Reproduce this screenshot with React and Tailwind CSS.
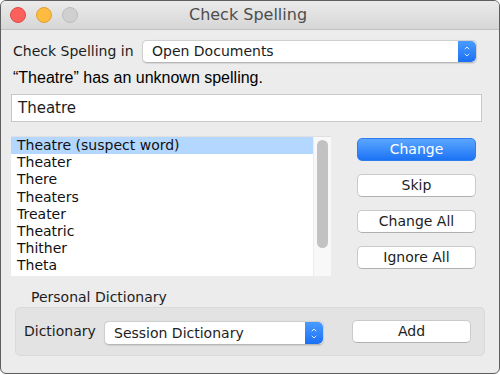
import { ChevronUp, ChevronDown } from 'lucide-react';

const words = ['Theatre (suspect word)', 'Theater', 'There', 'Theaters', 'Treater', 'Theatric', 'Thither', 'Theta'];

const Stepper = () => (
  <div className="w-[18px] h-full bg-gradient-to-b from-[#4a9bff] to-[#1a6ff5] rounded-r-[5px] flex flex-col items-center justify-center">
    <ChevronUp className="w-[10px] h-[8px] text-white -mb-[1px]" strokeWidth={2.5} />
    <ChevronDown className="w-[10px] h-[8px] text-white" strokeWidth={2.5} />
  </div>
);

const Popup = ({ label, className }) => (
  <div className={`flex items-stretch bg-white rounded-[5px] border border-[#cfcfcf] border-b-[#b8b8b8] shadow-[0_0.5px_1px_rgba(0,0,0,0.1)] ${className}`}>
    <div className="flex-1 flex items-center pl-[9px] text-[14px] text-[#1d1d1d]">{label}</div>
    <Stepper />
  </div>
);

const Button = ({ children, primary, className = '' }) => (
  <div
    className={`flex items-center justify-center h-[23px] rounded-[5px] text-[14px] ${
      primary
        ? 'bg-gradient-to-b from-[#5aa6ff] to-[#1b72f5] text-white border border-[#2e7cf0]'
        : 'bg-white text-[#1d1d1d] border border-[#cacaca] border-b-[#b0b0b0]'
    } ${className}`}
  >
    {children}
  </div>
);

export default function App() {
  return (
    <div className="w-[500px] h-[375px] bg-white" style={{ fontFamily: '"DejaVu Sans", "Liberation Sans", sans-serif' }}>
      <div className="w-[500px] h-[374px] border border-[#5e5e5e] rounded-[6px] overflow-hidden bg-[#ececec] flex flex-col">
        {/* Title bar */}
        <div className="h-[29px] shrink-0 bg-gradient-to-b from-[#ebebeb] to-[#d6d6d6] border-b border-[#c2c2c2] flex items-center relative">
          <div className="flex gap-[10px] pl-[9px]">
            <div className="w-[16px] h-[16px] rounded-full bg-[#fc605c] border border-[#de4a45]" />
            <div className="w-[16px] h-[16px] rounded-full bg-[#fdbc40] border border-[#dea034]" />
            <div className="w-[16px] h-[16px] rounded-full bg-[#d0d0d0] border border-[#bdbdbd]" />
          </div>
          <div className="absolute inset-0 flex items-center justify-center text-[16px] text-[#4d4d4d] pr-[4px]">Check Spelling</div>
        </div>

        {/* Body */}
        <div className="flex-1 flex flex-col px-[10px]">
          <div className="flex items-center mt-[10px] h-[23px]">
            <span className="w-[131px] pl-[2px] text-[14px] text-[#1d1d1d]">Check Spelling in</span>
            <Popup label="Open Documents" className="w-[335px] h-[23px]" />
          </div>

          <div className="mt-[4px] h-[22px] leading-[22px] pl-[2px] text-[16px] text-black" style={{ fontFamily: '"Liberation Sans", sans-serif' }}>
            “Theatre” has an unknown spelling.
          </div>

          <div className="mt-[5px] w-[471px] h-[28px] bg-white border border-[#c8c8c8] flex items-center pl-[6px] text-[15px] text-[#1d1d1d]">
            Theatre
          </div>

          <div className="mt-[14px] flex">
            <div className="w-[320px] h-[140px] flex bg-white border-t border-[#e0e0e0]">
              <div className="w-[302px] flex flex-col">
                {words.map((w, i) => (
                  <div
                    key={w}
                    className={`h-[17.2px] flex items-center pl-[6px] text-[14px] text-[#111] ${i === 0 ? 'bg-[#b3d7ff]' : ''}`}
                  >
                    {w}
                  </div>
                ))}
              </div>
              <div className="w-[18px] bg-[#f8f8f8] border-l border-[#ececec] flex justify-center pt-[3px]">
                <div className="w-[11px] h-[108px] rounded-full bg-[#c2c2c2]" />
              </div>
            </div>

            <div className="ml-[26px] flex flex-col gap-[13px] pt-[2px]">
              <Button primary className="w-[119px]">Change</Button>
              <Button className="w-[119px]">Skip</Button>
              <Button className="w-[119px]">Change All</Button>
              <Button className="w-[119px]">Ignore All</Button>
            </div>
          </div>

          <div className="mt-[13px] h-[17px] leading-[17px] pl-[20px] text-[14px] text-[#1d1d1d]">Personal Dictionary</div>

          <div className="mt-[1px] ml-[4px] w-[470px] h-[49px] rounded-[5px] bg-[#e3e3e3] border border-[#dadada] flex items-center">
            <span className="pl-[8px] w-[88px] text-[14px] text-[#1d1d1d]">Dictionary</span>
            <Popup label="Session Dictionary" className="w-[220px] h-[24px] mt-[3px]" />
            <Button className="ml-[28px] w-[119px] -mt-[1px]">Add</Button>
          </div>
        </div>
      </div>
    </div>
  );
}
